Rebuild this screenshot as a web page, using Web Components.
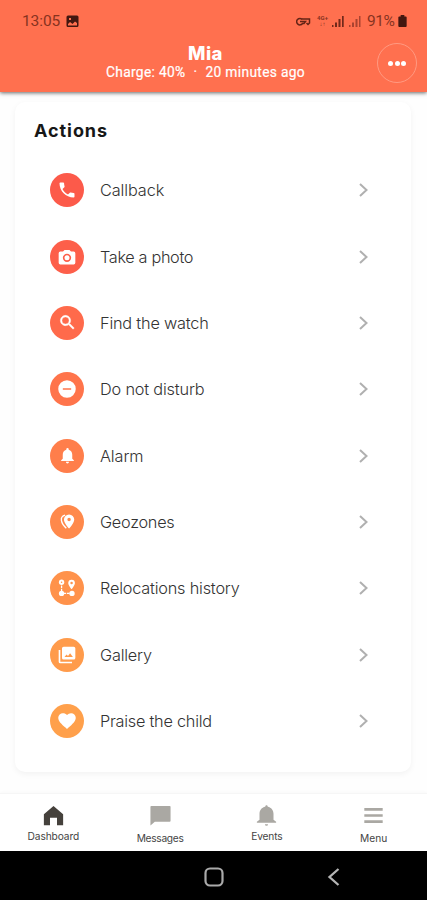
<!DOCTYPE html>
<html lang="en"><head><meta charset="utf-8"><title>Mia</title>
<style>
html,body{margin:0;height:100%}
body{width:427px;height:900px;overflow:hidden;background:#fff;font-family:Inter,"Liberation Sans",sans-serif}
</style></head><body>
<phone-app></phone-app>
<script>
const shadow=(el,html)=>{const t=document.createElement('template');t.innerHTML=html;el.attachShadow({mode:'open'}).appendChild(t.content.cloneNode(true));};
const icons={
phone:'<path d="M6.6 10.8c1.4 2.8 3.8 5.100 6.600 6.600l2.200-2.200c.27-.27.67-.36 1.020-.24 1.120.37 2.330.57 3.570.57.55 0 1 .45 1 1V20c0 .55-.45 1-1 1C10.600 21 3 13.400 3 4c0-.55.450-1 1-1h3.500c.55 0 1 .45 1 1 0 1.250.2 2.450.57 3.570.11.35.03.74-.25 1.020z"/>',
camera:'<path fill-rule="evenodd" d="M9 3.500 7.200 5.500H4a2 2 0 0 0-2 2v11.500a2 2 0 0 0 2 2h16a2 2 0 0 0 2-2V7.500a2 2 0 0 0-2-2h-3.200L15 3.500zM12 8a5 5 0 1 1 0 10 5 5 0 0 1 0-10z"/><path fill-rule="evenodd" d="M12 10a3 3 0 1 0 0 6 3 3 0 0 0 0-6z"/>',
search:'<path stroke="#fff" stroke-width=".5" d="M15.500 14h-.79l-.28-.27A6.500 6.500 0 1 0 13.730 14.430l.27.28v.79l5 4.990L20.490 19zm-6 0a4.500 4.500 0 1 1 0-9 4.500 4.500 0 0 1 0 9z"/>',
minus:'<path fill-rule="evenodd" d="M12 1.500a10.500 10.500 0 1 0 0 21 10.500 10.500 0 0 0 0-21zM7 11v2h10v-2z"/>',
bell:'<path d="M12 22c1.100 0 2-.9 2-2h-4a2 2 0 0 0 2 2zm6-6v-5c0-3.070-1.640-5.640-4.500-6.320V4a1.500 1.500 0 0 0-3 0v.68C7.630 5.360 6 7.920 6 11v5l-2 2v1h16v-1z"/>',
zones:'<path fill-rule="evenodd" d="M14 3a6.500 6.500 0 0 0-6.500 6.500c0 4.700 6.500 11.500 6.500 11.500s6.500-6.800 6.500-11.500A6.500 6.500 0 0 0 14 3zm0 4.200a2.200 2.200 0 1 1 0 4.400 2.200 2.200 0 0 1 0-4.400z"/><path d="M9 4C1.500 6 3.500 14 10.500 20.500" fill="none" stroke="#fff" stroke-width="1.700"/>',
route:'<path fill-rule="evenodd" d="M17.500 2a4 4 0 0 0-4 4c0 3 4 7.500 4 7.500s4-4.500 4-7.500a4 4 0 0 0-4-4zm0 2.600a1.500 1.500 0 1 1 0 3 1.500 1.500 0 0 1 0-3z"/><circle cx="5.500" cy="5" r="3.200"/><circle cx="5.500" cy="18.500" r="3.200"/><circle cx="18" cy="18.500" r="3.200"/><path d="M5.500 5v13.500H18" fill="none" stroke="#fff" stroke-width="1.500" stroke-dasharray="3 1"/><circle cx="5.500" cy="5" r=".9" fill="var(--c)"/>',
gallery:'<path fill-rule="evenodd" d="M22 15.500V4a2 2 0 0 0-2-2H8a2 2 0 0 0-2 2v11.500a2 2 0 0 0 2 2h12a2 2 0 0 0 2-2zM9 14.500l2.500-3.200 1.700 2 2.500-3.300 3.400 4.500z"/><path d="M2 6v14a2 2 0 0 0 2 2h14v-2H4V6z"/>',
heart:'<path d="m12 21.500-1.500-1.300C5.200 15.400 1.500 12.200 1.500 8A5.500 5.500 0 0 1 7.200 2.600c1.800 0 3.600.8 4.800 2.200a6.300 6.300 0 0 1 4.800-2.200A5.500 5.500 0 0 1 22.500 8c0 4.200-3.700 7.400-9 12.200z"/>',
home:'<path d="M12 1 1 10.500V23h7v-8.500h8V23h7V10.500z"/>',
chat:'<path d="M1.500 1h21a1 1 0 0 1 1 1v16a1 1 0 0 1-1 1H5.500L.5 23.500V2a1 1 0 0 1 1-1z"/>',
event:'<path d="M12 .2c.9 0 1.400.7 1.500 1.700 4 .8 6.500 4 6.500 8v7l3 2.300v1.200H1v-1.200l3-2.300v-7c0-4 2.500-7.200 6.500-8C10.600.9 11.100.2 12 .2zM10.200 22h3.600a1.800 1.800 0 0 1-3.600 0z"/>',
menu:'<path d="M1.500 3.500h21v3h-21zm0 7h21v3h-21zm0 7h21v3h-21z"/>'};
customElements.define('ui-icon',class extends HTMLElement{connectedCallback(){shadow(this,`<style>:host{display:block;width:20px;height:20px;flex:none}svg{display:block;width:100%;height:100%;fill:currentColor}</style><svg viewBox="0 0 24 24">${icons[this.getAttribute('name')]}</svg>`)}});
customElements.define('status-bar',class extends HTMLElement{connectedCallback(){shadow(this,`<style>:host{display:flex;align-items:center;height:41px;box-sizing:border-box;padding:1px 20px 0 22px;color:#87331f;font:15.500px Roboto,sans-serif}
svg{display:block}.t{width:40px;letter-spacing:-.1px}.pic{margin-left:4px}.r{margin-left:auto;display:flex;align-items:center}.lte{font-size:6px;line-height:6px;text-align:center;width:13px;margin-left:5px;font-weight:700}.p{margin-left:6px;margin-right:3px;width:28px;font-size:15.500px;letter-spacing:-.4px}</style>
<span class="t">13:05</span><svg class="pic" width="13" height="13" viewBox="0 0 13 13"><path fill="#431710" fill-rule="evenodd" d="M2 .5h9A1.500 1.500 0 0 1 12.500 2v8.500A1.500 1.500 0 0 1 11 12H2A1.500 1.500 0 0 1 .5 10.500V2A1.500 1.500 0 0 1 2 .5zM2 10.500h9V8L9 6.500 6.500 9 4 7 2 9zM3 3v2h2V3z"/></svg>
<div class="r"><svg width="15" height="11" viewBox="0 0 15 11" fill="none" stroke="#642416" stroke-width="1.500"><path d="M6.200 3.500A3.200 3.200 0 1 0 6.500 7.500H8L9.500 5.500H4M6.200 3H13.500V7L12 8.500 10.500 7"/></svg>
<span class="lte">4G+<br>↓↑</span><svg style="margin-left:3px" width="12" height="13" viewBox="0 0 12 13" fill="#71291b"><path d="M0 10h1.500v2H0zM3 7.500h2v4.500H3zM6.500 4h2v8h-2zM10 1h1.700v11H10z"/></svg>
<svg style="margin-left:5px" width="12" height="13" viewBox="0 0 12 13" fill="#a94330"><path d="M0 10h1.500v2H0zM3 7.500h2v4.500H3zM6.500 4h2v8h-2zM10 1h1.500v11H10z"/></svg>
<span class="p">91%</span><svg width="9" height="12" viewBox="0 0 9 13"><path fill="#431710" d="M2.500 0h4v1.500H8a1 1 0 0 1 1 1V12a1 1 0 0 1-1 1H1a1 1 0 0 1-1-1V2.500a1 1 0 0 1 1-1h1.500z"/></svg></div>`)}});
customElements.define('app-header',class extends HTMLElement{connectedCallback(){shadow(this,`<style>:host{display:block;height:92px;flex:none;background:#ff704f;box-shadow:0 1px 4px rgba(0,0,0,.6);position:relative;z-index:2;color:#fff}
.row{display:grid;grid-template-columns:1fr 40px;align-items:start;padding:1px 10px 0 34px;box-sizing:border-box;width:427px}
.m{text-align:center}.n{font:800 18.500px/23px Inter,sans-serif;letter-spacing:.4px}.s{font:400 13.800px/15px Roboto,sans-serif;letter-spacing:.32px;white-space:pre;-webkit-text-stroke:.2px #fff}.s span{margin:0 8px}
.b{margin-top:1px;width:40px;height:40px;box-sizing:border-box;border:1px solid #ff9a82;border-radius:50%;display:flex;align-items:center;justify-content:center;gap:1.500px}.b i{width:5px;height:5px;border-radius:50%;background:#fff}</style>
<status-bar></status-bar><div class="row"><div class="m"><div class="n">Mia</div><div class="s">Charge: 40%<span>·</span>20 minutes ago</div></div><div class="b"><i></i><i></i><i></i></div></div>`)}});
customElements.define('action-row',class extends HTMLElement{connectedCallback(){const a=n=>this.getAttribute(n);shadow(this,`<style>:host{--c:${a('color')};display:flex;align-items:center;height:66.320px;padding:0 42px 0 35px;color:#333}
.c{width:34px;height:34px;border-radius:50%;background:var(--c);display:flex;align-items:center;justify-content:center;color:#fff}.l{margin-left:16px;flex:1;font-size:16.300px;font-weight:300;letter-spacing:${a('ls')||0}px;white-space:nowrap}ui-icon{width:${a('size')||20}px;height:${a('size')||20}px}</style>
<div class="c"><ui-icon name="${a('icon')}"></ui-icon></div><span class="l"><slot></slot></span><svg width="11" height="16" viewBox="0 0 11 16"><path d="M2 2l6.500 6L2 14" fill="none" stroke="#b0b0b0" stroke-width="2"/></svg>`)}});
customElements.define('action-card',class extends HTMLElement{connectedCallback(){shadow(this,`<style>:host{display:block;width:396px;height:670px;margin:10px 0 0 15px;box-sizing:border-box;border-radius:10px;background:#fff;box-shadow:0 2px 6px rgba(0,0,0,.05)}h2{margin:0;padding:18px 0 0 19px;height:37.200px;font:700 18px/22px Inter,sans-serif;letter-spacing:.95px;color:#171717}</style><h2>Actions</h2><slot></slot>`)}});
customElements.define('nav-item',class extends HTMLElement{connectedCallback(){const a=n=>this.getAttribute(n);shadow(this,`<style>:host{display:flex;flex-direction:column;align-items:center;flex:1;padding-top:11px;color:${a('color')||'#aaa8a3'}}ui-icon{width:21px;height:21px}.t{margin-top:${a('gap')}px;font:10.200px/12px Inter,sans-serif;letter-spacing:${a('ls')||0}px;color:#444}</style><ui-icon name="${a('icon')}"></ui-icon><span class="t"><slot></slot></span>`)}});
customElements.define('tab-bar',class extends HTMLElement{connectedCallback(){shadow(this,`<style>:host{display:flex;height:58px;box-sizing:border-box;flex:none;background:#fff;border-top:1px solid #f6f6f6;box-shadow:0 -1px 3px rgba(0,0,0,.025)}</style><slot></slot>`)}});
customElements.define('system-nav',class extends HTMLElement{connectedCallback(){shadow(this,`<style>:host{display:grid;grid-template-columns:1fr 20px 1fr;align-items:center;height:49px;background:#000;flex:none;padding-top:2px;box-sizing:border-box}svg{display:block}.h{grid-column:2}.b{margin-left:103px}</style><svg class="h" width="20" height="20" fill="none" stroke="#aaa" stroke-width="2.200"><rect x="1.500" y="1.500" width="17" height="17" rx="4.500"/></svg><svg class="b" width="13" height="20" fill="none" stroke="#b5b5b5" stroke-width="2.300"><path d="M11.500 2 2.500 10l9 8"/></svg>`)}});
customElements.define('phone-app',class extends HTMLElement{connectedCallback(){
const rows=[['phone','#fc5a4a','Callback'],['camera','#fd5f4a','Take a photo'],['search','#ff6a4b','Find the watch'],['minus','#ff744b','Do not disturb'],['bell','#ff7e4b','Alarm'],['zones','#ff894b','Geozones'],['route','#ff924b','Relocations history'],['gallery','#ff9b4b','Gallery'],['heart','#ffa04b','Praise the child']];
const ls=[-.1,-.35,-.2,-.18,-.1,-.27,-.2,-.2,-.25];
shadow(this,`<style>:host{display:flex;flex-direction:column;width:427px;height:900px}main{flex:1;min-height:0;overflow:hidden;background:#fefefe}</style><app-header></app-header><main><action-card>${rows.map((r,i)=>`<action-row icon="${r[0]}" color="${r[1]}" ls="${ls[i]}" size="${['search','bell','zones'].includes(r[0])?19:20}">${r[2]}</action-row>`).join('')}</action-card></main><tab-bar><nav-item icon="home" color="#45413c" gap="4" ls="-.1">Dashboard</nav-item><nav-item icon="chat" gap="6" ls="-.3">Messages</nav-item><nav-item icon="event" gap="4" ls="-.2">Events</nav-item><nav-item icon="menu" gap="6">Menu</nav-item></tab-bar><system-nav></system-nav>`)}});
</script></body></html>
